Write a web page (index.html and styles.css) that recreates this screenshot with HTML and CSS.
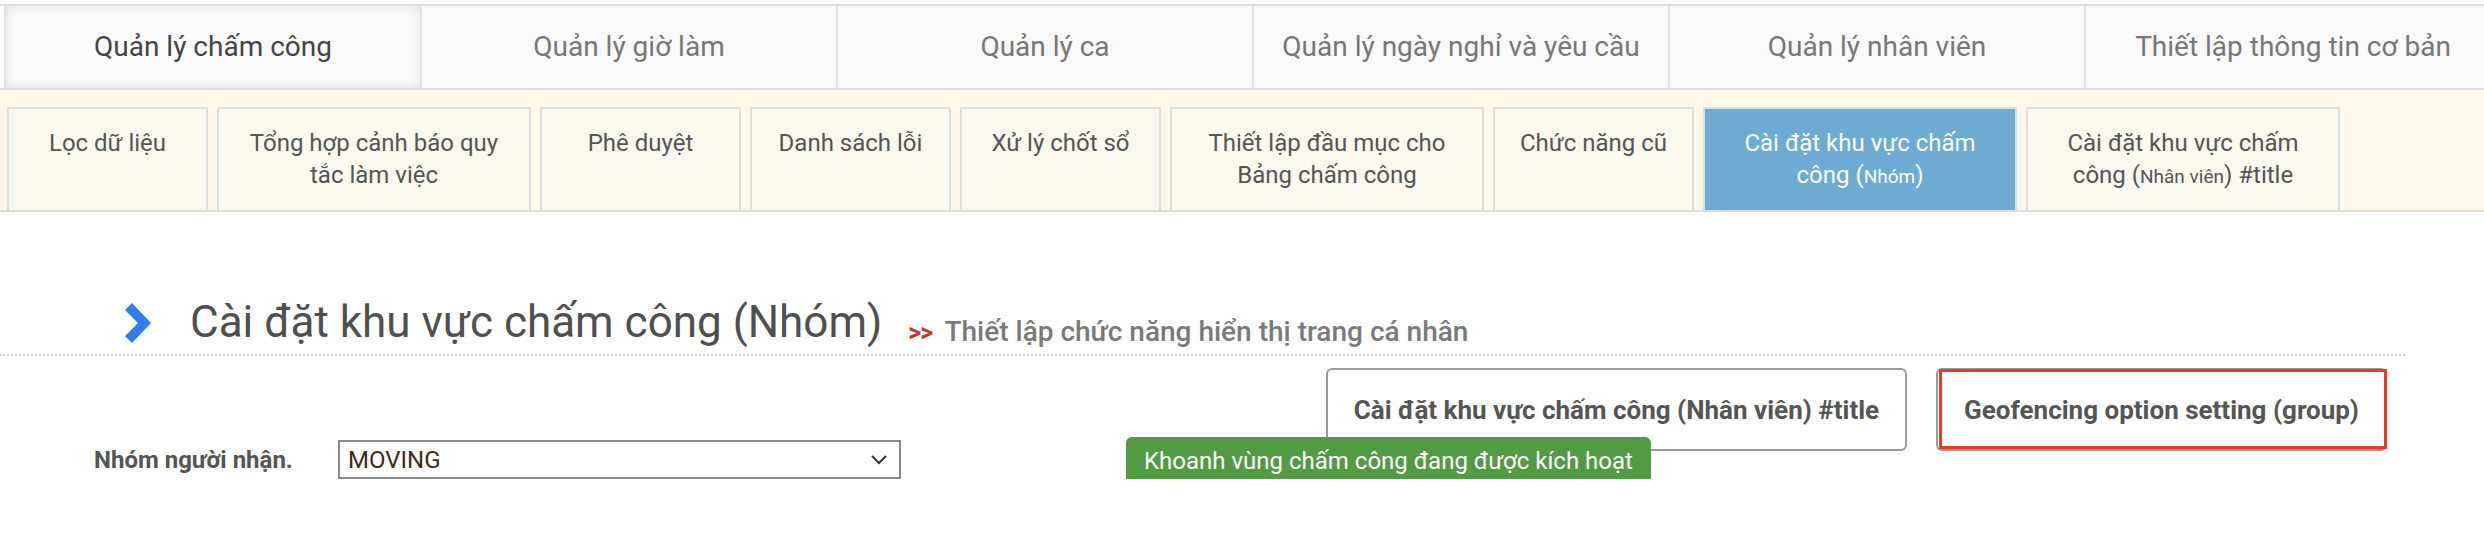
FILE: index.html
```html
<!DOCTYPE html>
<html lang="vi">
<head>
<meta charset="utf-8">
<title>Cài đặt khu vực chấm công (Nhóm)</title>
<link rel="stylesheet" href="styles.css">
</head>
<body>
<nav class="topnav">
  <a class="tab tab-active">Quản lý chấm công</a>
  <a class="tab">Quản lý giờ làm</a>
  <a class="tab">Quản lý ca</a>
  <a class="tab">Quản lý ngày nghỉ và yêu cầu</a>
  <a class="tab">Quản lý nhân viên</a>
  <a class="tab">Thiết lập thông tin cơ bản</a>
</nav>
<nav class="subnav">
  <a class="sub">Lọc dữ liệu</a>
  <a class="sub sub-wide">Tổng hợp cảnh báo quy tắc làm việc</a>
  <a class="sub">Phê duyệt</a>
  <a class="sub">Danh sách lỗi</a>
  <a class="sub">Xử lý chốt sổ</a>
  <a class="sub sub-wide">Thiết lập đầu mục cho Bảng chấm công</a>
  <a class="sub">Chức năng cũ</a>
  <a class="sub sub-wide sub-active">Cài đặt khu vực chấm công <span class="small">(<small>Nhóm</small>)</span></a>
  <a class="sub sub-wide">Cài đặt khu vực chấm công <span class="small">(<small>Nhân viên</small>)</span> #title</a>
</nav>
<main class="main">
  <div class="page-head">
    <svg class="chev" width="26" height="40" viewBox="0 0 26 40"><polygon points="0,7 7,0 26,20 7,40 0,33 13,20" fill="#2f7ef0"/></svg>
    <h1 class="title">Cài đặt khu vực chấm công (Nhóm)</h1>
    <span class="crumb"><b class="arrows">&gt;&gt;</b> Thiết lập chức năng hiển thị trang cá nhân</span>
  </div>
  <div class="panel">
    <div class="form-row">
      <label class="label">Nhóm người nhận.</label>
      <div class="select">
        <span>MOVING</span>
        <svg width="16" height="10" viewBox="0 0 16 10"><polyline points="1,1 8,8 15,1" fill="none" stroke="#333" stroke-width="2"/></svg>
      </div>
    </div>
    <div class="actions">
      <button class="btn">Cài đặt khu vực chấm công (Nhân viên) #title</button>
      <button class="btn btn-marked">Geofencing option setting (group)</button>
    </div>
    <div class="badge">Khoanh vùng chấm công đang được kích hoạt</div>
  </div>
</main>
</body>
</html>
```
FILE: styles.css
```css
* { box-sizing: border-box; }
body {
  margin: 0;
  font-family: Roboto, "Noto Sans", sans-serif;
  background: #fff;
  color: #555;
  overflow: hidden;
}
.topnav {
  display: flex;
  margin-top: 4px;
  padding-left: 4px;
  height: 86px;
  border-top: 2px solid #ddd;
  border-bottom: 2px solid #ddd;
  overflow: hidden;
}
.tab {
  flex: 0 0 416px;
  display: flex;
  align-items: center;
  justify-content: center;
  background: #f9f9f9;
  border-left: 2px solid #e2e2e2;
  font-size: 28px;
  color: #777;
  padding-bottom: 2px;
}
.tab-active {
  background: #fafafa;
  color: #444;
  box-shadow: inset 0 0 12px rgba(0,0,0,0.10);
}
.subnav {
  display: flex;
  gap: 9px;
  padding: 17px 0 0 7px;
  background: #fff8e8;
  border-bottom: 2px solid #ddd;
  height: 122px;
}
.sub {
  flex: 0 0 201px;
  height: 103px;
  background: #fbf9ee;
  border: 2px solid #dedede;
  border-bottom: none;
  text-align: center;
  font-size: 24px;
  line-height: 32px;
  color: #555;
  padding: 18px 14px 0;
}
.sub-wide { flex-basis: 314px; }
.sub-active {
  background: #6eabd3;
  border-color: #d8e2ea;
  color: #fff;
}
.sub small { font-size: 19px; }
.main { width: 2405px; }
.page-head {
  display: flex;
  align-items: baseline;
  padding: 0 0 4px 125px;
  height: 144px;
  align-content: flex-end;
  flex-wrap: wrap;
  border-bottom: 2px dotted #cfcfcf;
}
.chev { align-self: center; margin-right: 39px; position: relative; top: 1px; }
.title {
  margin: 0;
  font-size: 44px;
  font-weight: normal;
  color: #4f4f4f;
  line-height: 56px;
}
.crumb {
  margin-left: 26px;
  font-size: 28px;
  font-weight: 500;
  color: #7a7a7a;
  position: relative;
  top: 4px;
}
.arrows {
  color: #c0392b;
  font-size: 25px;
  margin-right: 6px;
  letter-spacing: -1px;
}
.panel {
  position: relative;
  display: flex;
  justify-content: space-between;
  align-items: flex-start;
  padding: 12px 18px 0 94px;
}
.form-row {
  display: flex;
  align-items: center;
  margin-top: 72px;
}
.label {
  width: 244px;
  font-size: 24px;
  font-weight: bold;
  color: #555;
}
.select {
  width: 563px;
  height: 39px;
  border: 2px solid #888;
  display: flex;
  align-items: center;
  justify-content: space-between;
  padding: 0 12px 0 8px;
  font-size: 24px;
  color: #3d2c18;
}
.actions {
  display: flex;
  gap: 29px;
}
.btn {
  position: relative;
  height: 83px;
  padding: 0 26px;
  background: #fff;
  border: 2px solid #9a9a9a;
  border-radius: 6px;
  font-family: inherit;
  font-size: 26px;
  font-weight: bold;
  color: #555;
}
.btn-marked::after {
  content: "";
  position: absolute;
  top: -1px;
  bottom: 0;
  left: 1px;
  right: -2px;
  border: 3px solid #e63c26;
}
.badge {
  position: absolute;
  left: 1126px;
  top: 81px;
  height: 47px;
  display: flex;
  align-items: center;
  padding: 0 18px;
  background: #529a43;
  color: #fff;
  font-size: 24px;
  border-radius: 6px;
}
```
